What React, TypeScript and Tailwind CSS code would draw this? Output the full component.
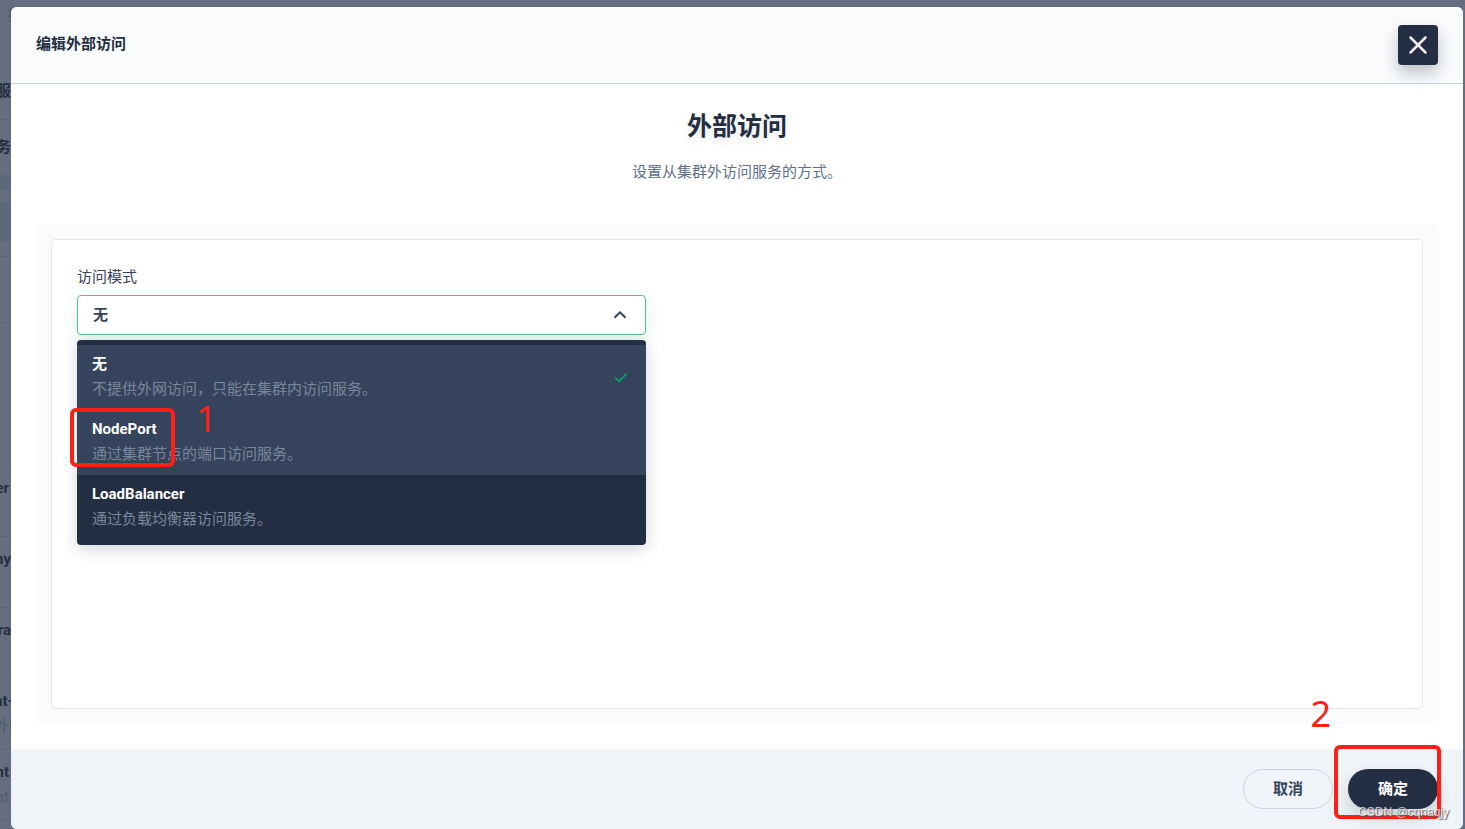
import { Check, X } from 'lucide-react';

interface AccessMode {
  name: string;
  description: string;
  selected?: boolean;
  highlighted?: boolean;
}

const modes: AccessMode[] = [
  { name: '无', description: '不提供外网访问，只能在集群内访问服务。', selected: true, highlighted: true },
  { name: 'NodePort', description: '通过集群节点的端口访问服务。', highlighted: true },
  { name: 'LoadBalancer', description: '通过负载均衡器访问服务。' },
];

const serviceRows = [
  { title: 'er', align: 'items-end pr-0.5' },
  { title: 'ny', align: 'items-end' },
  { title: 'ra', align: 'items-end' },
  { title: 'nt-', note: '外网', align: 'items-start -ml-1.5' },
  { title: 'nt', note: 'nt', align: 'items-end pr-0.5' },
];

function ServiceList() {
  return (
    <div className="absolute inset-y-0 left-0 w-[11px] overflow-hidden bg-[#656e7e] whitespace-nowrap text-[#242e42]">
      <div className="h-[63px] border-b border-[#5c6678] pt-1 pl-[7px] text-[#4d586c]">搜</div>
      <div className="-ml-1 h-[57px] border-b border-[#5c6678] leading-[56px] font-bold">服务</div>
      <div className="-ml-1 h-[55px] leading-[54px] font-bold">务</div>
      <div className="h-[15px] bg-[#5d687a]" />
      <div className="h-3" />
      <div className="h-10 bg-[#5d687a]" />
      <div className="h-[15px] border-b border-[#5c6678]" />
      <div className="h-[66px] border-b border-[#5c6678] bg-[#646e7f]" />
      <div className="h-[71px] bg-[#646e7f]" />
      <div className="h-[72px] border-b border-[#5c6678]" />
      {serviceRows.map((row, i) => (
        <div key={i} className="h-[71px] border-b border-[#5c6678] pt-2.5 leading-[25px]">
          <div className={`flex flex-col ${row.align}`}>
            <span className="font-bold">{row.title}</span>
            {row.note && <span className="text-[#4d586c]">{row.note}</span>}
          </div>
        </div>
      ))}
    </div>
  );
}

function ModeSelect() {
  return (
    <div className="relative w-[569px] max-w-full">
      <label id="mode-label" htmlFor="mode" className="block leading-5 text-[#36435c]">
        访问模式
      </label>
      <button
        id="mode"
        type="button"
        aria-haspopup="listbox"
        aria-expanded="true"
        className="mt-2 flex h-10 w-full items-center justify-between rounded border border-[#55bc8a] bg-white pr-[18px] pl-[15px] leading-5 font-bold text-[#36435c] shadow-[0_4px_16px_0_rgba(85,188,138,0.2)]"
      >
        无
        <svg viewBox="0 0 14 14" className="h-3.5 w-3.5" fill="none" stroke="currentColor" strokeWidth="2">
          <path d="M1.5 9.8 7 4.3l5.5 5.5" />
        </svg>
      </button>
      <ul
        role="listbox"
        aria-labelledby="mode-label"
        className="absolute top-full left-0 mt-[5px] w-full overflow-hidden rounded bg-[#242e42] py-[5px] shadow-[0_4px_16px_0_rgba(36,46,66,0.2)]"
      >
        {modes.map((mode) => (
          <li
            key={mode.name}
            role="option"
            aria-selected={!!mode.selected}
            className={`flex h-[65px] items-center justify-between pr-[17px] pl-[15px] ${mode.highlighted ? 'bg-[#36435c]' : ''}`}
          >
            <div className="pb-px">
              <p className="h-[25px] leading-6 font-bold text-white">{mode.name}</p>
              <p className="h-[25px] leading-6 text-[#79879c]">{mode.description}</p>
            </div>
            {mode.selected && <Check className="h-4 w-4 text-[#00aa72]" strokeWidth={2.5} />}
          </li>
        ))}
      </ul>
    </div>
  );
}

function Annotations() {
  return (
    <div className="pointer-events-none text-[36px] leading-9 text-[#ff1f14]">
      <div className="absolute top-[408px] left-[70px] h-[59px] w-[105px] rounded-md border-4 border-[#ff1f14]" />
      <span className="absolute top-[401px] left-[196px] font-['Noto_Sans','Open_Sans',sans-serif]">1</span>
      <div className="absolute right-6 bottom-[10px] h-[74px] w-[107px] rounded-md border-4 border-[#ff1f14]" />
      <span className="absolute right-[134px] bottom-[97px] font-['Noto_Sans','Open_Sans',sans-serif]">2</span>
      <span className="absolute right-4 bottom-[9px] font-['Liberation_Sans',sans-serif] text-xs leading-4 text-white/70 [text-shadow:1px_1px_1px_#555]">
        CSDN @cqnaqjy
      </span>
    </div>
  );
}

export default function App() {
  return (
    <div className="relative flex min-h-screen bg-[#656e7e] pt-[7px] pr-0.5 pl-[11px] font-[Roboto,'Noto_Sans_CJK_SC',sans-serif] text-[15px]">
      <ServiceList />
      <main role="dialog" aria-labelledby="dialog-title" className="relative flex flex-1 flex-col overflow-hidden rounded-md bg-white">
        <header className="flex h-[77px] items-start justify-between border-b border-[#ccd3db] bg-[#f9fbfd] px-[25px] pt-[18px]">
          <h1 id="dialog-title" className="text-[15px] leading-[38px] font-bold text-[#242e42]">
            编辑外部访问
          </h1>
          <button
            type="button"
            aria-label="关闭"
            className="flex h-10 w-10 items-center justify-center rounded bg-[#242e42] text-[#f5eef3] shadow-[0_8px_16px_0_rgba(36,46,66,0.28)]"
          >
            <X className="h-[30px] w-[30px]" />
          </button>
        </header>

        <section className="flex flex-1 flex-col px-[25px] pb-[25px]">
          <div className="pt-6 text-center">
            <h2 className="text-[25px] leading-[38px] font-bold text-[#242e42] [text-shadow:0_4px_8px_rgba(36,46,66,0.1)]">外部访问</h2>
            <p className="mt-3.5 leading-6 text-[#5f708a]">设置从集群外访问服务的方式。</p>
          </div>
          <div className="mt-10 flex flex-1 flex-col rounded bg-[#f9fbfd] p-[15px]">
            <div className="flex-1 rounded border border-[#e3e9ef] bg-white px-[25px] pt-[27px]">
              <ModeSelect />
            </div>
          </div>
        </section>

        <footer className="flex h-20 items-center justify-end gap-[15px] bg-[#eff4f9] px-[25px]">
          <button type="button" className="h-10 w-[90px] rounded-full border border-[#ccd3db] font-bold text-[#36435c]">
            取消
          </button>
          <button type="button" className="h-10 w-[90px] rounded-full bg-[#242e42] font-bold text-white shadow-[0_8px_16px_0_rgba(36,46,66,0.2)]">
            确定
          </button>
        </footer>
      </main>
      <Annotations />
    </div>
  );
}
